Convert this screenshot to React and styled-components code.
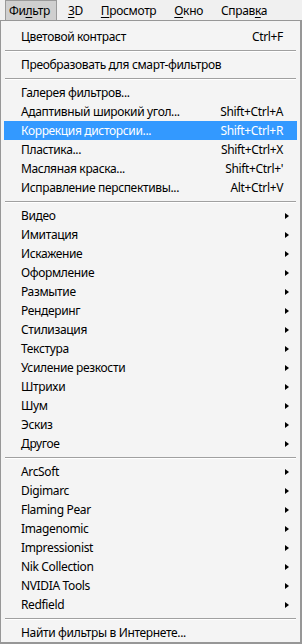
import React from 'react';
import styled, { createGlobalStyle } from 'styled-components';

const GlobalStyle = createGlobalStyle`
    html, body {
        margin: 0;
        padding: 0;
        background: #f0f0f0;
    }
    * {
        box-sizing: border-box;
    }
`;

const topItems = [
    { label: 'Фильтр', key: 2, active: true },
    { label: '3D', key: 0 },
    { label: 'Просмотр', key: 0 },
    { label: 'Окно', key: 0 },
    { label: 'Справка', key: 5 },
];

const groups = [
    [{ label: 'Цветовой контраст', shortcut: 'Ctrl+F' }],
    [{ label: 'Преобразовать для смарт-фильтров' }],
    [
        { label: 'Галерея фильтров...' },
        { label: 'Адаптивный широкий угол...', shortcut: 'Shift+Ctrl+A' },
        { label: 'Коррекция дисторсии...', shortcut: 'Shift+Ctrl+R', selected: true },
        { label: 'Пластика...', shortcut: 'Shift+Ctrl+X' },
        { label: 'Масляная краска...', shortcut: "Shift+Ctrl+'" },
        { label: 'Исправление перспективы...', shortcut: 'Alt+Ctrl+V' },
    ],
    [
        'Видео', 'Имитация', 'Искажение', 'Оформление', 'Размытие', 'Рендеринг',
        'Стилизация', 'Текстура', 'Усиление резкости', 'Штрихи', 'Шум', 'Эскиз', 'Другое',
    ].map(label => ({ label, submenu: true })),
    [
        'ArcSoft', 'Digimarc', 'Flaming Pear', 'Imagenomic', 'Impressionist',
        'Nik Collection', 'NVIDIA Tools', 'Redfield',
    ].map(label => ({ label, submenu: true })),
    [{ label: 'Найти фильтры в Интернете...' }],
];

export default function App() {
    return (
        <>
            <GlobalStyle />
            <Screen>
                <MenuBar>
                    {topItems.map(item => (
                        <TopItem key={item.label} active={item.active}>
                            <Mnemonic label={item.label} index={item.key} />
                        </TopItem>
                    ))}
                </MenuBar>
                <Dropdown>
                    {groups.map((group, gi) => (
                        <React.Fragment key={gi}>
                            {gi > 0 && <Separator />}
                            {group.map(item => (
                                <MenuRow key={item.label} selected={item.selected}>
                                    <Label>{item.label}</Label>
                                    {item.shortcut && <Shortcut>{item.shortcut}</Shortcut>}
                                    {item.submenu && <Arrow />}
                                </MenuRow>
                            ))}
                        </React.Fragment>
                    ))}
                </Dropdown>
            </Screen>
        </>
    );
}

function Mnemonic({ label, index }) {
    return (
        <span>
            {label.slice(0, index)}
            <u>{label[index]}</u>
            {label.slice(index + 1)}
        </span>
    );
}

const Screen = styled.div`
    width: 302px;
    height: 644px;
    display: flex;
    flex-direction: column;
    font-family: 'Noto Sans', 'Open Sans', sans-serif;
    font-size: 12px;
    letter-spacing: -0.35px;
    color: #000;
    background: #f0f0f0;
`;

const MenuBar = styled.div`
    height: 22px;
    display: flex;
    align-items: flex-end;
    padding-left: 5px;
    background: #f0f0f0;
`;

const TopItem = styled.div`
    height: 20px;
    padding: 0 6px 0 3px;
    margin-right: 7px;
    display: flex;
    align-items: center;
    border: 1px solid ${p => (p.active ? '#9a9a9a' : 'transparent')};
    border-bottom: none;
    background: ${p => (p.active ? '#cfcfcf' : 'transparent')};

    u {
        text-underline-offset: 2px;
    }
`;

const Dropdown = styled.div`
    flex: 1;
    display: flex;
    flex-direction: column;
    padding: 6px 2px 0 2px;
    background: #f4f4f4;
    border: 1px solid #979797;
    border-right-width: 2px;
    border-bottom-width: 2px;
`;

const MenuRow = styled.div`
    height: 19px;
    display: flex;
    align-items: center;
    padding: 0 6px 0 17px;
    margin: 0 1px;
    background: ${p => (p.selected ? '#3399ff' : 'transparent')};
    color: ${p => (p.selected ? '#fff' : '#000')};
`;

const Label = styled.span`
    flex: 1;
    white-space: nowrap;
`;

const Shortcut = styled.span`
    white-space: nowrap;
    margin-right: 8px;
`;

const Arrow = styled.span`
    width: 0;
    height: 0;
    border-top: 3.5px solid transparent;
    border-bottom: 3.5px solid transparent;
    border-left: 4px solid #000;
    margin-right: 2px;
`;

const Separator = styled.div`
    height: 9px;
    margin: 0 2px;
    display: flex;
    align-items: center;

    &::before {
        content: '';
        flex: 1;
        height: 1px;
        background: #a0a0a0;
        box-shadow: 0 1px 0 #ffffff;
    }
`;
